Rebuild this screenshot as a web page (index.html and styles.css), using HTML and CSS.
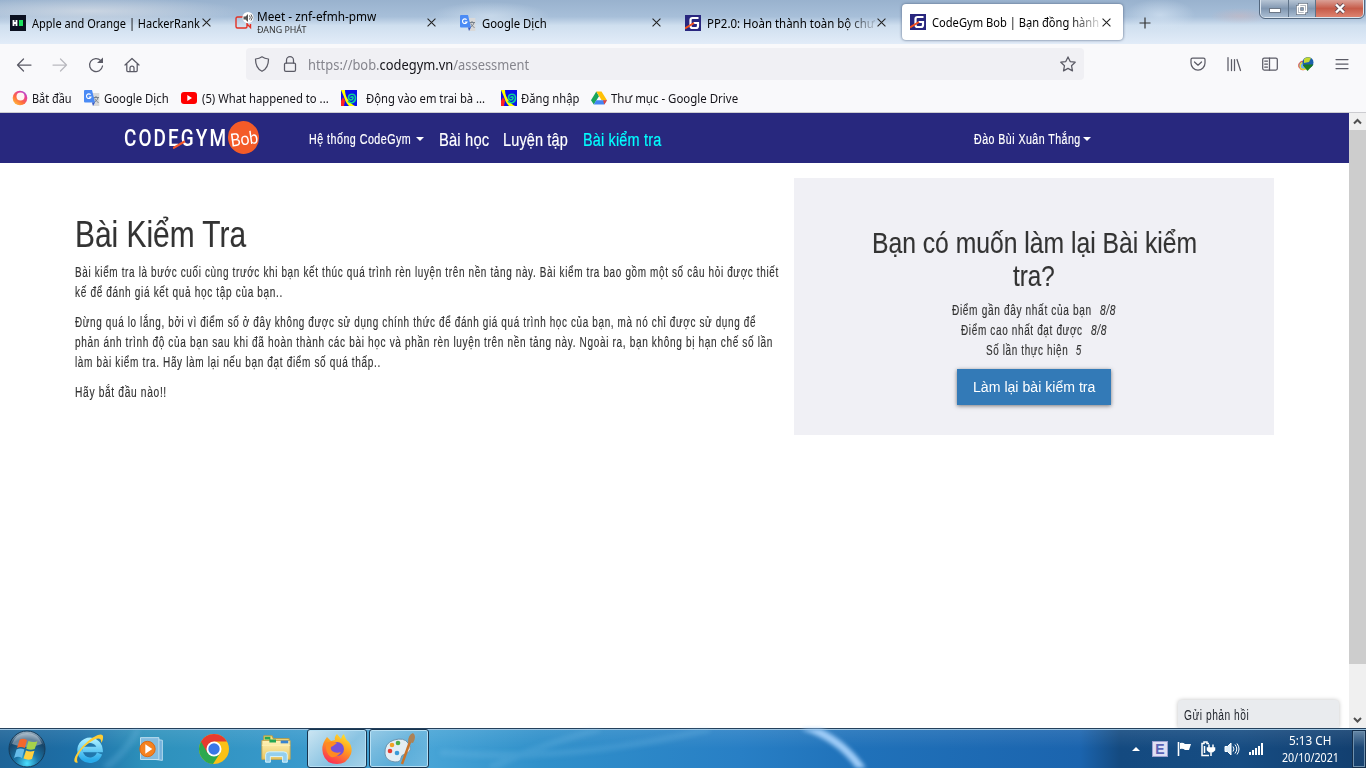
FILE: index.html
```html
<!DOCTYPE html>
<html lang="vi">
<head>
<meta charset="utf-8">
<title>CodeGym Bob</title>
<link rel="stylesheet" href="styles.css">
</head>
<body>
<svg width="0" height="0" class="defs">
  <defs>
    <radialGradient id="orb" cx=".5" cy=".9" r=".9"><stop offset="0" stop-color="#4be0ff"/><stop offset=".35" stop-color="#1b76a8"/><stop offset=".75" stop-color="#174468"/><stop offset="1" stop-color="#a9bccb"/></radialGradient>
    <linearGradient id="fire" x1=".8" y1="0" x2=".3" y2="1"><stop offset="0" stop-color="#ffe52f"/><stop offset=".45" stop-color="#ff9a1f"/><stop offset="1" stop-color="#fb2b58"/></linearGradient>
    <linearGradient id="ie" x1="0" y1="0" x2="0" y2="1"><stop offset="0" stop-color="#a5ecff"/><stop offset="1" stop-color="#27aaea"/></linearGradient>
    <linearGradient id="folder" x1="0" y1="0" x2="0" y2="1"><stop offset="0" stop-color="#fff3b8"/><stop offset="1" stop-color="#e9c65f"/></linearGradient>
    <linearGradient id="ff" x1=".1" y1="1" x2=".9" y2="0"><stop offset="0" stop-color="#ffca3a"/><stop offset=".4" stop-color="#ff6a3d"/><stop offset=".75" stop-color="#e33ca0"/><stop offset="1" stop-color="#8c5cf0"/></linearGradient>
    <symbol id="x" viewBox="0 0 8 8"><path d="M.5.5l7 7M7.500.5l-7 7" stroke="#222" stroke-width=".95" fill="none"/></symbol>
    <symbol id="translate" viewBox="0 0 16 16"><path d="M7 3h8.300v13H9z" fill="#d9d9d9"/><path d="M9 7.500h6M12 6v1.500m2 0c-.4 2.300-2.200 4-4 5m.8-4c.8 2 2.200 3.200 3.700 4" fill="none" stroke="#77818b"/><path d="M1 0h7l3 12.500H1a1 1 0 0 1-1-1V1a1 1 0 0 1 1-1z" fill="#4b8bf5"/><path d="M8 12.500h3l-2 3.500z" fill="#3158c8"/><path d="M6.600 4.700A2.300 2.300 0 1 0 7 7H4.800" fill="none" stroke="#fff" stroke-width="1.100"/></symbol>
    <symbol id="gym" viewBox="0 0 16 16"><path fill="#29277f" d="M0 0h16v16H0z"/><path d="M13.500 3H7.500Q5.500 3 5.500 5v6Q5.500 13 7.500 13H11q2 0 2-2V8H8.500" fill="none" stroke="#fff" stroke-width="2.200"/><path d="M0 13.500L9 8" stroke="#f4511e" stroke-width="2"/></symbol>
    <symbol id="snail" viewBox="0 0 16 16"><path fill="#0a12e8" d="M0 0h16v16H0z"/><path d="M0 0h4c0 6 3 12 10 16H8C5 13 4 10 3 7z" fill="#ff0"/><path d="M0 16V11l2-4 2 4-1 5z" fill="#f22"/><path d="M10 8c0-2 2.500-1.500 2 .3-.6 2.500-4.500 2-4.500-.8C7.500 3 14.500 3 14.500 8c0 5-5 6-7.500 3" fill="none" stroke="#0cd09a" stroke-width="1.600"/></symbol>
  </defs>
</svg>

<header class="tabs">
  <div class="tab"><svg class="fav" viewBox="0 0 16 16"><path fill="#0b1120" d="M0 0h16v16H0z"/><path d="M3.500 5v6m3-6v6m-3-3h3" stroke="#fff" stroke-width="1.800"/><path fill="#1ce05e" d="M9 5h4v6H9z"/></svg><div class="label"><span data-w="168">Apple and Orange | HackerRank</span></div><svg class="close"><use href="#x"/></svg></div>
  <div class="tab"><svg class="fav meet" viewBox="0 0 19 18"><path d="M9 5H2.500Q1 5 1 6.500v8Q1 16 2.500 16h8q1.500 0 1.500-1.500V11m0 1l3.500 3.500V12" fill="none" stroke="#e33225" stroke-width="1.400"/><circle cx="13" cy="5.500" r="5.500" fill="#fff"/><path d="M8.500 4.500h2L13 2v8l-2.500-2.500h-2z" fill="#555"/><path d="M14.500 3.500q1.600 2 0 4m1.500-5q2.500 3 0 6" fill="none" stroke="#555"/></svg><div class="label double"><span data-w="119">Meet - znf-efmh-pmw</span><small data-w="49">ĐANG PHÁT</small></div><svg class="close"><use href="#x"/></svg></div>
  <div class="tab"><svg class="fav"><use href="#translate"/></svg><div class="label"><span data-w="65">Google Dịch</span></div><svg class="close"><use href="#x"/></svg></div>
  <div class="tab"><svg class="fav"><use href="#gym"/></svg><div class="label fade"><span data-w="168">PP2.0: Hoàn thành toàn bộ chư</span></div><svg class="close"><use href="#x"/></svg></div>
  <div class="tab active"><svg class="fav"><use href="#gym"/></svg><div class="label fade"><span data-w="167">CodeGym Bob | Bạn đồng hành</span></div><svg class="close"><use href="#x"/></svg></div>
  <svg class="plus" viewBox="0 0 12 12"><path d="M6 .5v11M.5 6h11" stroke="#333" stroke-width="1.200"/></svg>
  <div class="winbtns">
    <i class="min"><svg width="12" height="5"><rect x=".5" y=".5" width="11" height="4" fill="#fff" stroke="#6c7786"/></svg></i>
    <i class="max"><svg width="12" height="12" fill="none"><path d="M3.500 1.500h7v7h-7zM1.500 3.500h7v7h-7z" stroke="#687485" stroke-width="3"/><path d="M3.500 1.500h7v7h-7zM1.500 3.500h7v7h-7z" stroke="#fff" stroke-width="1.500"/></svg></i>
    <i class="cls"><svg width="12" height="11"><path d="M2 1.500l8 8m0-8l-8 8" stroke="#654d55" stroke-width="4"/><path d="M2 1.500l8 8m0-8l-8 8" stroke="#fff" stroke-width="2.400"/></svg></i>
  </div>
</header>

<div class="toolbar">
  <svg class="ic back" viewBox="0 0 16 16"><path d="M15 8H1.500M7.500 2L1.500 8l6 6"/></svg>
  <svg class="ic forward" viewBox="0 0 16 16"><path d="M1 8h13.500M8.500 2l6 6-6 6"/></svg>
  <svg class="ic reload" viewBox="0 0 16 16"><path d="M14.500 9A6.500 6.500 0 1 1 12.800 3.600L14 5"/><path d="M9 6h6V.5z" class="solid"/></svg>
  <svg class="ic home" viewBox="0 0 16 16"><path d="M1 8l7-6.500L15 8M2.800 7v6.500q0 1 1 1h8.400q1 0 1-1V7M6 14v-3a2 2 0 0 1 4 0v3"/></svg>
  <div class="url">
    <svg class="ic" viewBox="0 0 16 16"><path d="M8 .8c2 1.500 4 2 6.500 2.200C14.500 9 13 13 8 15.300 3 13 1.500 9 1.500 3 4 2.800 6 2.300 8 .8z"/></svg>
    <svg class="ic lock" viewBox="0 0 16 16"><rect x="2.500" y="7" width="11" height="8.300" rx="1.300"/><path d="M4.500 7V4.200a3.500 3.500 0 0 1 7 0V7"/></svg>
    <span class="address" data-w="221">https://bob.<b>codegym.vn</b>/assessment</span>
    <svg class="ic star" viewBox="0 0 16 16"><path d="M8 .9l2.200 4.700 5 .6-3.700 3.500 1 5.200L8 12.400l-4.500 2.500 1-5.200L.8 6.200l5-.6z"/></svg>
  </div>
  <div class="tools">
    <svg class="ic" viewBox="0 0 16 16"><path d="M2.500 2h11Q15 2 15 3.500V7A7 7 0 0 1 1 7V3.500Q1 2 2.500 2zM4.500 6L8 9.200 11.500 6"/></svg>
    <svg class="ic" viewBox="0 0 16 16"><path d="M2 1.500v13M5.500 3.500v11M8.500 3.500v11M11 3.500l3.500 11"/></svg>
    <svg class="ic" viewBox="0 0 16 16"><rect x=".7" y="2" width="14.600" height="12" rx="1.500"/><path d="M7.500 2v12M2.700 5h2.800M2.700 8h2.800M2.700 11h2.800"/></svg>
    <svg class="ic idm" viewBox="0 0 16 16"><circle cx="5" cy="9.500" r="4.300" fill="#6fb0e8" stroke="#e8402c" stroke-width="1"/><circle cx="5.500" cy="10" r="3.300" stroke="#f2dc2a"/><circle cx="10" cy="6.500" r="5.500" fill="#1b5fae" stroke="none"/><path d="M6 3q3-3 7-1l-2 4-5 1z" fill="#c5d930" stroke="none"/><path d="M6 8.500h9.500L9.500 15 5 9.500z" fill="#1c7a1c" stroke="none"/></svg>
    <svg class="ic" viewBox="0 0 16 16"><path d="M2 3.500h12M2 8h12M2 12.500h12"/></svg>
  </div>
</div>

<nav class="bookmarks">
  <a style="width:72px"><svg viewBox="0 0 16 16"><circle cx="8" cy="8" r="7.300" fill="url(#ff)"/><circle cx="8.500" cy="6.500" r="4" fill="#fff4f2"/></svg><span data-w="40">Bắt đầu</span></a>
  <a style="width:97px"><svg><use href="#translate"/></svg><span data-w="65">Google Dịch</span></a>
  <a class="yt" style="width:160px"><svg viewBox="0 0 16 16"><rect y="2" width="16" height="12" rx="3" fill="#f00"/><path d="M6.300 5v6L11 8z" fill="#fff"/></svg><span data-w="127">(5) What happened to ...</span></a>
  <a class="wide" style="width:160px"><svg><use href="#snail"/></svg><span data-w="119">Động vào em trai bà ...</span></a>
  <a style="width:90px"><svg><use href="#snail"/></svg><span data-w="58">Đăng nhập</span></a>
  <a><svg viewBox="0 0 16 16"><path d="M5.300 1.500L8 6.200 2.800 14.500 0 10.300z" fill="#19a55a"/><path d="M5.300 1.500h5.200L16 10.300h-5.400z" fill="#ffc107"/><path d="M5.300 10.300H16l-2.700 4.200H2.800z" fill="#4285f4"/><path d="M12 10.300h4l-2.700 4.200z" fill="#ea4335"/></svg><span data-w="127">Thư mục - Google Drive</span></a>
</nav>

<div class="viewport">
  <main class="page">
    <nav class="navbar">
      <div class="logo"><span class="word" data-w="104">CODEGYM</span><svg class="slash" viewBox="0 0 12 8"><path d="M0 7.500L11 1" stroke="#f4562a" stroke-width="2"/></svg><div class="bob"><span data-w="28">Bob</span></div></div>
      <a class="narrow sys"><span data-w="102">Hệ thống CodeGym</span><i class="caret"></i></a>
      <a class="big b1"><span data-w="50">Bài học</span></a>
      <a class="big b2"><span data-w="65">Luyện tập</span></a>
      <a class="big b3"><span data-w="78">Bài kiểm tra</span></a>
      <a class="narrow user"><span data-w="107">Đào Bùi Xuân Thắng</span><i class="caret"></i></a>
    </nav>
    <div class="content">
      <article class="intro">
        <h1><span data-w="171">Bài Kiểm Tra</span></h1>
        <p><span data-w="704">Bài kiểm tra là bước cuối cùng trước khi bạn kết thúc quá trình rèn luyện trên nền tảng này. Bài kiểm tra bao gồm một số câu hỏi được thiết</span><br><span data-w="208">kế để đánh giá kết quả học tập của bạn..</span></p>
        <p><span data-w="681">Đừng quá lo lắng, bởi vì điểm số ở đây không được sử dụng chính thức để đánh giá quá trình học của bạn, mà nó chỉ được sử dụng để</span><br><span data-w="698">phản ánh trình độ của bạn sau khi đã hoàn thành các bài học và phần rèn luyện trên nền tảng này. Ngoài ra, bạn không bị hạn chế số lần</span><br><span data-w="306">làm bài kiểm tra. Hãy làm lại nếu bạn đạt điểm số quá thấp..</span></p>
        <p><span data-w="92">Hãy bắt đầu nào!!</span></p>
      </article>
      <aside class="panel">
        <h2><span data-w="325">Bạn có muốn làm lại Bài kiểm</span><br><span data-w="42">tra?</span></h2>
        <div class="row"><span data-w="140">Điểm gần đây nhất của bạn</span><em data-w="16">8/8</em></div>
        <div class="row"><span data-w="122">Điểm cao nhất đạt được</span><em data-w="16">8/8</em></div>
        <div class="row"><span data-w="82">Số lần thực hiện</span><em data-w="6">5</em></div>
        <button class="retry"><span data-w="122">Làm lại bài kiểm tra</span></button>
      </aside>
    </div>
    <div class="feedback"><span data-w="65">Gửi phản hồi</span></div>
  </main>
  <div class="scroll">
    <svg viewBox="0 0 17 17"><path d="M5 10.500L8.500 7l3.500 3.500"/></svg>
    <div class="thumb"></div>
    <svg class="end" viewBox="0 0 17 17"><path d="M5 7l3.500 3.500L12 7"/></svg>
  </div>
</div>

<footer class="taskbar">
  <svg class="glow" viewBox="0 0 1366 40" preserveAspectRatio="none"><path d="M803 -3q38 12 60 46" stroke="#a0cdf8" stroke-width="8"/><path d="M490 40Q530 20 600 0M440 24Q570 35 710 0M105 40Q130 20 138 0" stroke="#79bfe8" stroke-opacity=".22" stroke-width="7"/></svg>
  <div class="slot start"><svg viewBox="0 0 38 38"><circle cx="19" cy="19" r="18" fill="url(#orb)" stroke="#163b58"/><path d="M4 14Q8 3 19 3t15 11q-15 6-30 0z" fill="#fff" opacity=".35"/><path d="M11.500 10q3-2.500 7.500 0L16.800 18q-4-2-7.800 0z" fill="#f2672c"/><path d="M20.500 11q4 2 9 .2L26.700 19q-4 1.800-8.500-.3z" fill="#a6d24a"/><path d="M8.500 19.500q4-2 7.900 0L14 28q-4-2.500-8 0z" fill="#66bce9"/><path d="M18 20.500q4 2 8.500.3L24 29q-4 1.500-8.500-.500z" fill="#ffd03e"/></svg></div>
  <div class="slot"><svg viewBox="0 0 32 32"><path d="M26.500 20.500A10 10 0 1 1 27 16.500H10" fill="none" stroke="url(#ie)" stroke-width="5.500"/><path d="M5 29.500C-3 31 3 19 13 10S31-1 30 5c0 2-1 4-2 5 1-5-3-6-9-2C10 13 1 25 5 29.500z" fill="#fecd35"/></svg></div>
  <div class="slot media"><svg viewBox="0 0 32 32"><path d="M14 4l15 2v23l-15-2z" fill="#74b1db" stroke="#bfe0f1"/><path d="M4 3h21v25H4z" fill="#83bce0" stroke="#cae6f3"/><circle cx="12" cy="16" r="8.800" fill="#f58220" stroke="#d9630a"/><path d="M9.500 10.500v11l8-5.500z" fill="#fff"/></svg></div>
  <div class="slot chrome"><svg viewBox="0 0 32 32"><circle cx="16" cy="16" r="15" fill="#fbc116"/><path d="M16 16L3 8.500a15 15 0 0 1 26 0H16z" fill="#e63b2e"/><path d="M3 8.500A15 15 0 0 0 15 31l7.500-11.500L16 16z" fill="#2da94f"/><path d="M3 8.500L9.500 20 16 8.500z" fill="#e63b2e"/><circle cx="16" cy="16" r="7.500" fill="#fff"/><circle cx="16" cy="16" r="5.700" fill="#3977e8"/></svg></div>
  <div class="slot"><svg viewBox="0 0 34 32"><path d="M4 2h9l1 3h17v18H4z" fill="#f4dd82" stroke="#bd9b3d"/><path d="M2 7h30v20H2z" fill="url(#folder)" stroke="#c8a850"/><path d="M5 3h6v3H5zM10 6h7v3h-7z" fill="#25a653"/><path d="M22 7h8v3h-8z" fill="#3985d0"/><path d="M2 12h30" stroke="#fff2b7"/><path d="M6 30V22q0-3 4-3h15q4 0 4 3v8h-5v-6H11v6z" fill="#94cfed" stroke="#d8f5ff"/></svg></div>
  <div class="app current"><svg viewBox="0 0 32 32"><path d="M4 7l2-3 4 4 4-1q-1-3 2-6l4 5q1-4 3-5 1 5 5 8 4 6 2 12Q26 31 16 31 5 31 2 21 0 13 4 7z" fill="url(#fire)"/><circle cx="16" cy="16" r="7" fill="#7451d9"/><path d="M5 10q6-3 11 0l-4 3q-4 1-1 5 4 3 9 1-4 6-10 5Q4 20 5 10z" fill="#ff8a21"/></svg></div>
  <div class="app"><svg viewBox="0 0 32 32"><path d="M2 21Q1 10 11 7t14 3q6 8-3 11-4 1-4 4 0 4-6 4Q3 28 2 21z" fill="#e3eef4" stroke="#6e95ae"/><circle cx="7" cy="18" r="2.300" fill="#e43d32"/><circle cx="9" cy="12" r="2.300" fill="#f0a325"/><circle cx="15" cy="10" r="2.300" fill="#4cae46"/><circle cx="14" cy="20" r="2.300" fill="#3b9bd8"/><path d="M28 6L19 31" stroke="#c9732a" stroke-width="2.500"/><path d="M25 9q0-7 5-9 4 3 0 10z" fill="#ac8257"/></svg></div>
  <div class="tray">
    <svg width="16" height="16"><path d="M4 10l4-4 4 4z" fill="#fff"/></svg>
    <div class="lang">E</div>
    <svg width="16" height="16"><path d="M2.500 1v14" stroke="#fff" stroke-width="1.600"/><path d="M4 2q3-1 5 1h6l-2 6H9Q7 7 4 8z" fill="#fff"/></svg>
    <svg width="16" height="16" fill="none" stroke="#fff" stroke-width="1.500"><path d="M9 2.500H7V1H4v1.500H2v12h7M4.500 5v7"/><path d="M9 3.500v4m4-4v4M7.500 7h7v2q-3.500 4-7 0zM11 11v4" fill="#fff"/></svg>
    <svg width="16" height="16" fill="none" stroke="#fff"><path d="M1 5.500h2.500L7 2v12l-3.500-3.500H1z" fill="#dcecf8"/><path d="M9 5.500q2 2.500 0 5m2-7q3.500 4.500 0 9m2-10q4 5.500 0 11"/></svg>
    <svg width="16" height="16"><path d="M1 11h2v3H1zM4 9h2v5H4zM7 7h2v7H7zM10 5h2v9h-2zM13 2h2v12h-2z" fill="#fff"/></svg>
  </div>
  <div class="clock"><span data-w="42">5:13 CH</span><span data-w="57">20/10/2021</span></div>
  <div class="peek"></div>
</footer>
<script src="script.js"></script>
</body>
</html>
```

FILE: styles.css
```css
* { box-sizing: border-box; }
body { margin: 0; width: 1366px; height: 768px; overflow: hidden; display: flex; flex-direction: column; font: 12px "Noto Sans", sans-serif; color: #000; background: #fff; }
svg { display: block; flex: none; }
.defs { position: absolute; }
[data-w] { display: inline-block; white-space: nowrap; transform-origin: 0 50%; flex: none; }

.tabs { height: 44px; flex: none; display: flex; align-items: flex-start; gap: 4px; padding: 4px 0 0 2px; background: radial-gradient(ellipse 150px 14px at 90px 11px, #e4e6ea99, transparent), radial-gradient(ellipse 60px 14px at 490px 16px, #dce9f599, transparent), radial-gradient(ellipse 35px 16px at 1160px 15px, #dbe9f799, transparent), radial-gradient(ellipse 30px 8px at 1240px 16px, #d8b4b566, transparent), linear-gradient(#99b2ce, #a7bfd9 38%, #cfdfef 58%, #e2ecf8); }
.tab { width: 221px; height: 37px; padding-left: 8px; display: flex; align-items: center; flex: none; border-radius: 4px; }
.tab.active { background: #fff; box-shadow: 0 0 3px #4f627f; height: 36px; }
.fav { width: 16px; height: 16px; margin-right: 6px; }
.fav.meet { width: 19px; height: 18px; margin-right: 3px; margin-top: -4px; }
.label { width: 170px; line-height: 17px; padding-top: 1px; }
.label span { display: block; }
.label.double { line-height: 14px; }
.label small { display: block; font-size: 8.5px; line-height: 12px; color: #333; }
.fade { width: 168px; margin-right: 2px; -webkit-mask-image: linear-gradient(90deg, #000 82%, transparent 103%); mask-image: linear-gradient(90deg, #000 82%, transparent 103%); }
.close { width: 9px; height: 9px; }
.plus { width: 12px; height: 12px; margin: 13px 0 0 12px; }
.winbtns { display: flex; width: 104px; height: 18px; margin: -4px 2px 0 auto; border: 1px solid #dce6f0; border-top: 0; border-radius: 0 0 5px 5px; overflow: hidden; outline: 1px solid #53677e; }
.winbtns i { display: flex; align-items: center; justify-content: center; background: linear-gradient(#b7c5d5, #8197b1 50%, #a9bdd2); border-right: 1px solid #5f7389; width: 28px; }
.winbtns .max { width: 27px; }
.winbtns .min { padding-top: 3px; }
.winbtns .cls { flex: 1; border: 0; background: linear-gradient(#dba096, #c65b49 50%, #dd8370); }

.toolbar { height: 44px; padding-top: 4px; flex: none; display: flex; align-items: flex-start; background: #f9f9fb; }
.ic { width: 16px; height: 16px; fill: none; stroke: #5b5b66; stroke-width: 1.25; stroke-linejoin: round; stroke-linecap: round; }
.ic .solid { fill: #5b5b66; stroke: none; }
.toolbar > .ic { margin-top: 9px; }
.back { margin-left: 16px; }
.forward { margin-left: 20px; opacity: .4; }
.reload { margin-left: 20px; }
.home { margin-left: 20px; }
.url { width: 838px; height: 32px; margin-left: 106px; padding: 0 8px; display: flex; align-items: center; background: #f0f0f4; border-radius: 4px; }
.lock { margin: 0 10px 0 12px; }
.address { font-size: 14px; color: #85858d; line-height: 20px; padding-top: 1px; }
.address b { color: #15141a; font-weight: 400; }
.star { margin-left: auto; }
.tools { display: flex; gap: 20px; margin: 8px 0 0 106px; }

.bookmarks { height: 25px; flex: none; padding: 2px 0 0 12px; display: flex; align-items: flex-start; background: #f9f9fb; border-bottom: 1px solid #ccccd0; }
.bookmarks a { display: flex; gap: 4px; line-height: 17px; color: #15141a; }
.bookmarks svg { width: 16px; height: 16px; }
.bookmarks .yt { gap: 5px; }
.bookmarks .wide { gap: 9px; }

.viewport { display: flex; flex: none; height: 615px; }
.page { width: 1349px; position: relative; font-family: "Liberation Sans Narrow", "Liberation Sans", Arial, sans-serif; font-size: 14px; line-height: 20px; color: #333; }
.navbar { height: 50px; background: #28287e; display: flex; align-items: center; color: #fff; padding: 3px 0 0 124px; letter-spacing: .6px; -webkit-text-stroke: .2px currentColor; }
.navbar a { display: flex; align-items: center; }
.narrow { margin-top: -1px; }
.logo { width: 185px; height: 36px; display: flex; align-items: center; position: relative; margin-top: -3px; -webkit-text-stroke: 0; }
.word { font: 500 23px/24px Roboto, sans-serif; letter-spacing: 2.5px; margin-top: 2px; }
.slash { width: 13px; height: 9px; position: absolute; left: 49px; top: 20px; }
.bob { width: 31px; height: 33px; margin-top: -1px; border-radius: 50%; background: #f45b28; display: flex; justify-content: center; align-items: center; font: 400 18px/20px Lato, sans-serif; letter-spacing: 0; rotate: -8deg; }
.caret { border: 4px solid transparent; border-top-color: currentColor; border-bottom: 0; margin-left: 5px; }
.big { font-size: 18px; letter-spacing: .2px; }
.b1 { margin-left: 15px; }
.b2 { margin-left: 14px; }
.b3 { margin-left: 15px; color: #0ff; }
.user { margin-left: 313px; }
.user .caret { margin-left: 2px; }
.content { display: flex; align-items: flex-start; padding-left: 75px; }
.intro { width: 719px; padding-top: 52px; letter-spacing: .9px; -webkit-text-stroke: .15px currentColor; }
h1, h2 { font-weight: 400; margin: 0; letter-spacing: 0; }
h1 { font-size: 36px; line-height: 40px; margin-bottom: 7px; }
p { margin: 0 0 10px; }
p span, h1 span, h2 span { vertical-align: top; }
.panel { width: 480px; height: 257px; margin-top: 15px; padding-top: 48px; background: #f0f0f5; display: flex; flex-direction: column; align-items: center; text-align: center; letter-spacing: .9px; -webkit-text-stroke: .15px currentColor; }
h2 { font-size: 30px; line-height: 33px; margin-bottom: 8px; }
h2 span { text-align: left; }
.row { display: flex; gap: 8px; height: 20px; text-align: left; }
.retry { width: 154px; height: 36px; margin-top: 9px; padding: 0 16px; border: 0; background: #337ab7; color: #fff; font: 14px "Liberation Sans", Arial, sans-serif; text-align: left; box-shadow: 0 1px 4px rgba(0,0,0,.5); -webkit-text-stroke: 0; }
.feedback { position: absolute; left: 1178px; top: 587px; width: 161px; height: 28px; padding: 5px 6px; color: #1d2129; background: #e9ebee; border-radius: 4px 4px 0 0; box-shadow: 0 0 4px rgba(0,0,0,.25); letter-spacing: .7px; }
.scroll { width: 17px; background: #f0f0f0; display: flex; flex-direction: column; }
.scroll svg { width: 17px; height: 17px; fill: none; stroke: #505050; stroke-width: 2; }
.thumb { height: 534px; background: #cdcdcd; }
.scroll .end { margin-top: auto; }

.taskbar { height: 40px; flex: none; position: relative; display: flex; align-items: center; color: #fff; border-top: 1px solid #24405c; box-shadow: inset 0 1px #9ec5e2; background: linear-gradient(#ffffff18, transparent 50%), linear-gradient(90deg, #1e6498 0, #1d70a8 80px, #2d91bb 145px, #3798ca 280px, #47a4d6 430px, #3090ca 540px, #287fc5 740px, #2072ba 850px, #1b64ae 1080px, #144a80 1120px, #164c82 1240px, #123e6e 1366px); }
.glow { position: absolute; inset: 0; width: 1366px; height: 39px; fill: none; filter: blur(2px); }
.slot { width: 62px; display: flex; justify-content: center; position: relative; }
.slot svg { width: 32px; height: 32px; }
.slot.start { width: 54px; margin-right: 4px; }
.slot.start svg { width: 38px; height: 38px; }
.slot.media svg { width: 28px; height: 28px; }
.chrome { margin-left: 1px; }
.app { width: 60px; height: 39px; margin-right: 2px; display: flex; align-items: center; justify-content: center; position: relative; border: 1px solid #18344f; border-radius: 3px; box-shadow: inset 0 0 0 1px #b7e0f4; background: linear-gradient(135deg, #ffffff66, #ffffff20 60%, #ffffff38); }
.app.current { background: linear-gradient(135deg, #e0f0f8dd, #a9d3eaaa 60%, #c0dfefcc); }
.app svg { width: 32px; height: 32px; }
.tray { display: flex; gap: 8px; margin-left: auto; position: relative; }
.lang { width: 16px; height: 16px; background: #dfe0f4; border: 1px solid #9aa0d0; color: #5a63b5; font: bold 14px/14px "Liberation Sans", sans-serif; text-align: center; }
.clock { width: 58px; margin: 0 13px 0 17px; display: flex; flex-direction: column; align-items: center; line-height: 17px; }
.peek { width: 14px; height: 38px; border: 1px solid #142e4b; box-shadow: inset 0 0 0 1px #6f91ae; background: linear-gradient(#6787a6, #1c4775 45%, #17416e); }
```

FILE: script.js
```js
// Condense each label horizontally to its declared width.
document.querySelectorAll('[data-w]').forEach(function (el) {
  var target = Number(el.dataset.w);
  var display = getComputedStyle(el).display;
  el.style.display = 'inline-block';
  el.style.width = 'max-content';
  var natural = el.offsetWidth;
  el.style.display = display;
  el.style.width = target + 'px';
  el.style.transform = 'scaleX(' + target / natural + ')';
});
```
